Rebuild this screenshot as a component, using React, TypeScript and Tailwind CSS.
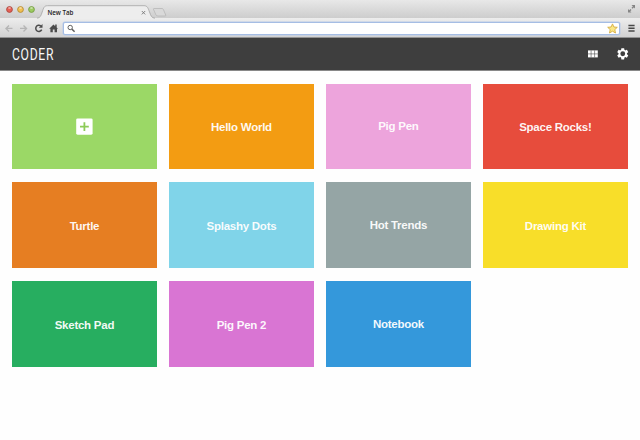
import React from "react";

type Tile = { name: string; color: string; raised?: boolean };

const tiles: Tile[] = [
  { name: "Hello World", color: "bg-[#f39c12]" },
  { name: "Pig Pen", color: "bg-[#eda4dc]", raised: true },
  { name: "Space Rocks!", color: "bg-[#e74c3c]" },
  { name: "Turtle", color: "bg-[#e67e22]" },
  { name: "Splashy Dots", color: "bg-[#80d4e9]" },
  { name: "Hot Trends", color: "bg-[#95a5a5]", raised: true },
  { name: "Drawing Kit", color: "bg-[#f8de29]" },
  { name: "Sketch Pad", color: "bg-[#27ae60]" },
  { name: "Pig Pen 2", color: "bg-[#d975d3]" },
  { name: "Notebook", color: "bg-[#3498db]", raised: true },
];

function TrafficLight({ color, rim }: { color: string; rim: string }) {
  return (
    <svg width="7" height="7" viewBox="0 0 7 7">
      <circle cx="3.5" cy="3.5" r="2.9" fill={color} stroke={rim} strokeWidth="0.9" />
      <ellipse cx="3.5" cy="2" rx="1.5" ry="0.8" fill="#fff" opacity="0.6" />
    </svg>
  );
}

function TabStrip() {
  return (
    <div className="flex h-[18px] w-full items-start bg-linear-to-b from-[#e8e8e8] to-[#cdcdcd]">
      <div className="ml-[5.5px] mt-[6.3px] flex w-[29.5px] gap-[4.2px]">
        <TrafficLight color="#e85f55" rim="#a84941" />
        <TrafficLight color="#f2c050" rim="#b28a38" />
        <TrafficLight color="#9ccb60" rim="#749c43" />
      </div>
      <div className="relative ml-[2px] h-[19px] w-[120px]">
        <svg className="absolute left-0 top-0" width="132" height="19" viewBox="0 0 132 19">
          <path d="M0 19 V18.2 C3.5 18 4 15.5 5.2 12 C6.7 7.5 7.2 5.7 10.5 5.7 H107 C110.5 5.7 111 8 112.5 12 C114 16 114.6 18 118 18.2 V19 Z" fill="#ededed" />
          <path d="M0 18.2 C3.5 18 4 15.5 5.2 12 C6.7 7.5 7.2 5.7 10.5 5.7 H107 C110.5 5.7 111 8 112.5 12 C114 16 114.6 18 118 18.2" fill="none" stroke="#a5a5a5" strokeWidth="0.8" />
          <path d="M117 8.5 H125 Q126 8.5 126.4 9.5 L128.7 15 Q129.2 16 128 16 H121 Q119.5 16 119 15 L116.5 9.5 Q116.2 8.5 117 8.5 Z" fill="#d9d9d9" stroke="#b2b2b2" strokeWidth="0.7" />
          <path d="M104.8 11 L108.2 14.4 M108.2 11 L104.8 14.4" stroke="#777" strokeWidth="0.9" />
        </svg>
        <span className="absolute left-[10.4px] top-[8px] whitespace-nowrap font-['Open_Sans',sans-serif] text-[6.2px] font-semibold leading-[10px] text-[#222]">
          New Tab
        </span>
      </div>
      <svg className="ml-auto mr-[4px] mt-[4px]" width="9" height="10" viewBox="0 0 9 10">
        <path d="M4.5 1 H8 V4.5 Z M1 5 V8.5 H4.5 Z" fill="#858585" />
        <path d="M5 4.3 L7 2.3 M2 7.4 L4 5.4" stroke="#858585" strokeWidth="1.4" />
      </svg>
    </div>
  );
}

function Toolbar() {
  return (
    <div className="flex h-[20px] w-full items-center border-b border-[#929292] bg-linear-to-b from-[#ededed] to-[#d2d2d2]">
      <svg width="63" height="19" viewBox="0 0 63 19">
        <g fill="none" stroke="#b5b5b5" strokeWidth="1.4">
          <path d="M12.5 10.4 H6 M9 7.4 L6 10.4 L9 13.4" />
          <path d="M20 10.4 H26.5 M23.5 7.4 L26.5 10.4 L23.5 13.4" />
        </g>
        <path d="M40.8 7.9 A3.1 3.1 0 1 0 41.7 11.6" fill="none" stroke="#4b4b4b" strokeWidth="1.5" />
        <path d="M42.5 6 V9.7 H38.8 Z" fill="#4b4b4b" />
        <path d="M49.2 10.8 L53.5 6.6 L55.2 8.2 V6.5 H56.7 V9.5 L58 10.8 H57 V14.2 H54.6 V11.5 H52.8 V14.2 H50.4 V10.8 Z" fill="#4b4b4b" />
      </svg>
      <div className="mt-px flex h-[13px] min-w-0 flex-1 items-center justify-between rounded-[2px] border border-[#a5bde4] bg-white pl-[3px] pr-[1px] shadow-[0_0_0_0.5px_#b7c9e8]">
        <svg width="9" height="9" viewBox="0 0 9 9">
          <circle cx="3.2" cy="3.5" r="2.2" fill="none" stroke="#606060" strokeWidth="1" />
          <path d="M4.9 5.1 L7.6 7.7" stroke="#606060" strokeWidth="1.5" />
        </svg>
        <svg width="11" height="11" viewBox="0 0 11 11">
          <path d="M5.5 0.9 L6.9 4 L10.3 4.3 L7.8 6.6 L8.5 10 L5.5 8.2 L2.5 10 L3.2 6.6 L0.7 4.3 L4.1 4 Z" fill="#fae786" stroke="#d5ad41" strokeWidth="0.9" strokeLinejoin="round" />
        </svg>
      </div>
      <svg className="ml-[8px] mr-[5px]" width="7" height="19" viewBox="0 0 7 19">
        <path d="M0.4 7.6 H6.6 M0.4 10.3 H6.6 M0.4 13 H6.6" stroke="#484848" strokeWidth="1.5" />
      </svg>
    </div>
  );
}

function Header() {
  return (
    <header className="flex h-[33px] w-full items-center border-b border-[#888] bg-[#3e3e3e] pl-[12px] pr-[11px]">
      <h1 className="origin-left scale-x-[0.76] pt-px font-[Roboto,sans-serif] text-[16px] leading-[20px] tracking-[0.9px] text-[#f8f8f8]">
        CODER
      </h1>
      <svg className="ml-auto" width="10" height="8" viewBox="0 0 10 8">
        <path d="M0 0.4 H9.8 V7.4 H0 Z" fill="#fff" />
        <path d="M3.1 0.4 V7.4 M6.6 0.4 V7.4 M0 3.9 H9.8" stroke="#3e3e3e" strokeWidth="0.55" />
      </svg>
      <svg className="ml-[17.5px]" width="13.5" height="13.5" viewBox="0 0 24 24" fill="#fff">
        <path fillRule="evenodd" d="M19.43 12.98c.04-.32.07-.64.07-.98s-.03-.66-.07-.98l2.11-1.65c.19-.15.24-.42.12-.64l-2-3.46c-.12-.22-.39-.3-.61-.22l-2.49 1c-.52-.4-1.08-.73-1.69-.98l-.38-2.65C14.46 2.18 14.25 2 14 2h-4c-.25 0-.46.18-.49.42l-.38 2.65c-.61.25-1.17.59-1.69.98l-2.49-1c-.23-.09-.49 0-.61.22l-2 3.46c-.13.22-.07.49.12.64l2.11 1.65c-.04.32-.07.65-.07.98s.03.66.07.98l-2.11 1.65c-.19.15-.24.42-.12.64l2 3.46c.12.22.39.3.61.22l2.49-1c.52.4 1.08.73 1.69.98l.38 2.65c.03.24.24.42.49.42h4c.25 0 .46-.18.49-.42l.38-2.65c.61-.25 1.17-.59 1.69-.98l2.49 1c.23.09.49 0 .61-.22l2-3.46c.12-.22.07-.49-.12-.64l-2.11-1.65zM12 16.3a4.3 4.3 0 1 1 0-8.6 4.3 4.3 0 0 1 0 8.6z" />
      </svg>
    </header>
  );
}

export default function App() {
  return (
    <div className="flex h-[440px] w-[640px] flex-col overflow-hidden bg-[#fefefe] font-['Liberation_Sans',Arial,sans-serif]">
      <TabStrip />
      <Toolbar />
      <Header />
      <main className="grid grid-cols-[repeat(4,144.3px)] auto-rows-[85.6px] gap-x-[12.7px] gap-y-[13.3px] pl-[12.3px] pt-[12.5px]">
        <button className="flex items-center justify-center bg-[#9bd866]" aria-label="Add">
          <svg width="17" height="17" viewBox="0 0 17 17">
            <rect x="0.2" y="0.4" width="16.4" height="16.3" rx="1.4" fill="#fff" />
            <path d="M8.4 4.2 V13 M4 8.6 H12.8" stroke="#8dcb58" strokeWidth="1.8" />
          </svg>
        </button>
        {tiles.map((tile) => (
          <div key={tile.name} className={`flex items-center justify-center ${tile.color}`}>
            <span
              className={`whitespace-nowrap text-[11.5px] font-bold leading-[14px] tracking-[-0.25px] text-white/95 ${
                tile.raised ? "pb-px" : "pt-px"
              }`}
            >
              {tile.name}
            </span>
          </div>
        ))}
      </main>
    </div>
  );
}
